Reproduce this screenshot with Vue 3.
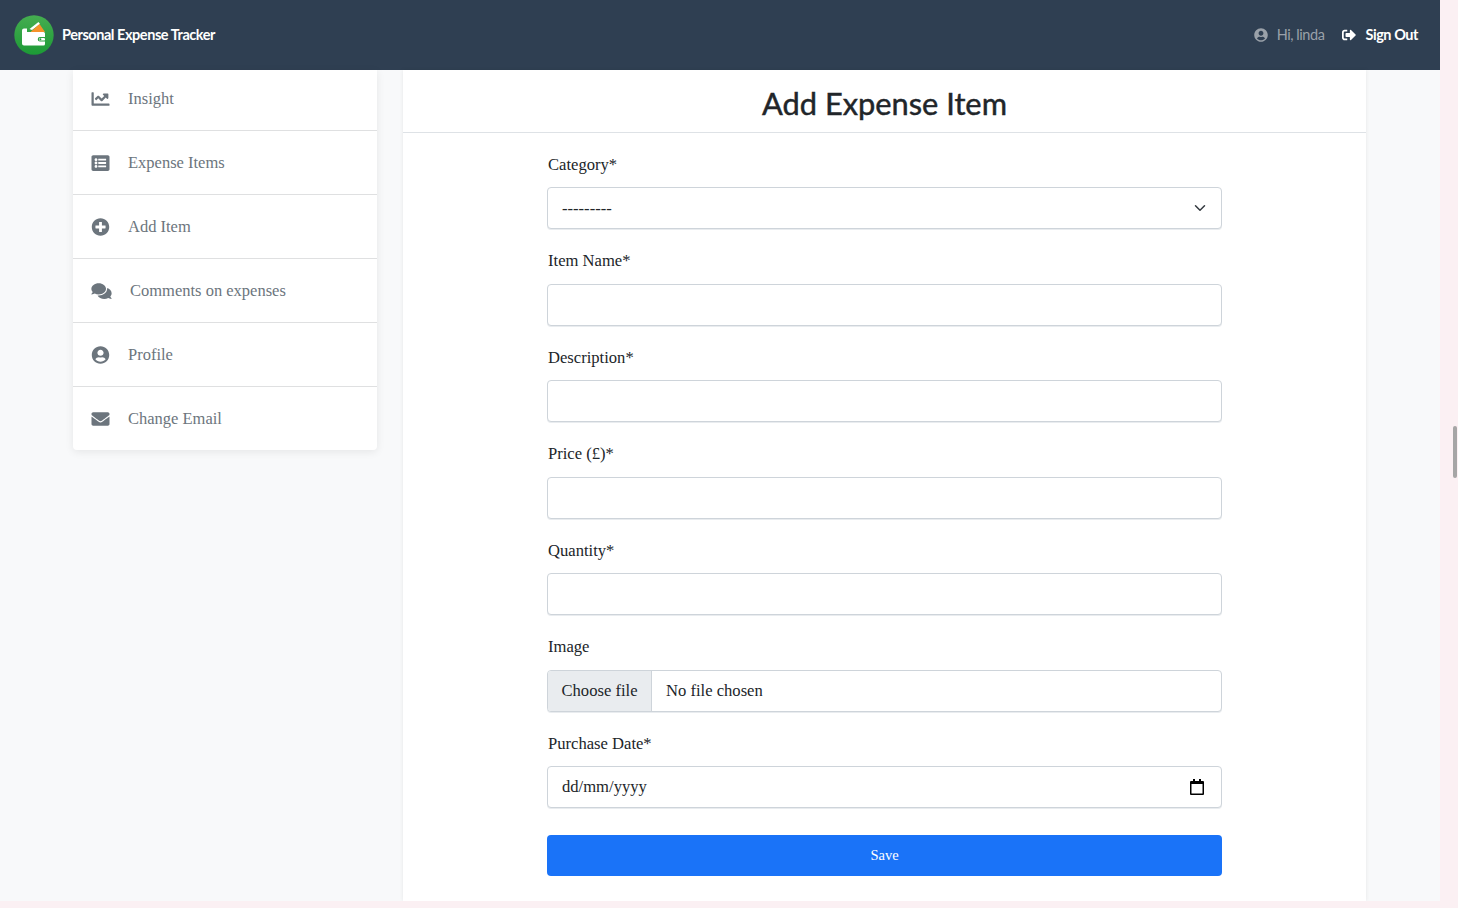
<script setup>
const menu = [
  { label: 'Insight', box: '0 0 512 512', d: 'M496 384H64V80c0-8.84-7.16-16-16-16H16C7.16 64 0 71.16 0 80v336c0 17.67 14.33 32 32 32h464c8.84 0 16-7.16 16-16v-32c0-8.84-7.16-16-16-16zM464 96H345.94c-21.38 0-32.09 25.85-16.97 40.97l32.4 32.4L288 242.75l-73.37-73.37c-12.5-12.5-32.76-12.5-45.25 0l-68.69 68.69c-6.25 6.25-6.25 16.38 0 22.63l22.62 22.62c6.25 6.25 16.38 6.25 22.63 0L192 237.25l73.37 73.37c12.5 12.5 32.76 12.5 45.25 0l96-96 32.4 32.4c15.12 15.12 40.97 4.41 40.97-16.97V112c.01-8.84-7.15-16-15.99-16z' },
  { label: 'Expense Items', box: '0 0 512 512', d: 'M464 480H48c-26.51 0-48-21.49-48-48V80c0-26.51 21.49-48 48-48h416c26.51 0 48 21.49 48 48v352c0 26.51-21.49 48-48 48zM128 120c-22.091 0-40 17.909-40 40s17.909 40 40 40 40-17.909 40-40-17.909-40-40-40zm0 96c-22.091 0-40 17.909-40 40s17.909 40 40 40 40-17.909 40-40-17.909-40-40-40zm0 96c-22.091 0-40 17.909-40 40s17.909 40 40 40 40-17.909 40-40-17.909-40-40-40zm288-136v-32c0-6.627-5.373-12-12-12H204c-6.627 0-12 5.373-12 12v32c0 6.627 5.373 12 12 12h200c6.627 0 12-5.373 12-12zm0 96v-32c0-6.627-5.373-12-12-12H204c-6.627 0-12 5.373-12 12v32c0 6.627 5.373 12 12 12h200c6.627 0 12-5.373 12-12zm0 96v-32c0-6.627-5.373-12-12-12H204c-6.627 0-12 5.373-12 12v32c0 6.627 5.373 12 12 12h200c6.627 0 12-5.373 12-12z' },
  { label: 'Add Item', box: '0 0 512 512', d: 'M256 8C119 8 8 119 8 256s111 248 248 248 248-111 248-248S393 8 256 8zm144 276c0 6.6-5.4 12-12 12h-92v92c0 6.6-5.4 12-12 12h-56c-6.6 0-12-5.4-12-12v-92h-92c-6.6 0-12-5.4-12-12v-56c0-6.6 5.4-12 12-12h92v-92c0-6.6 5.4-12 12-12h56c6.6 0 12 5.4 12 12v92h92c6.6 0 12 5.4 12 12v56z' },
  { label: 'Comments on expenses', wide: true, box: '0 0 576 512', d: 'M416 192c0-88.4-93.1-160-208-160S0 103.6 0 192c0 34.3 14.1 65.9 38 92-13.4 30.2-35.5 54.2-35.8 54.5-2.2 2.3-2.8 5.7-1.5 8.7S4.8 352 8 352c36.6 0 66.9-12.3 88.7-25 32.2 15.7 70.3 25 111.3 25 114.9 0 208-71.6 208-160zm122 220c23.9-26 38-57.7 38-92 0-66.9-53.5-124.2-129.3-148.1.9 6.6 1.3 13.3 1.3 20.1 0 105.9-107.7 192-240 192-10.8 0-21.3-.8-31.7-1.9C207.8 439.6 281.8 480 368 480c41 0 79.1-9.2 111.3-25 21.8 12.7 52.1 25 88.7 25 3.2 0 6.1-1.9 7.3-4.8 1.3-2.9.7-6.3-1.5-8.7-.3-.3-22.4-24.2-35.8-54.5z' },
  { label: 'Profile', box: '0 0 496 512', d: 'M248 8C111 8 0 119 0 256s111 248 248 248 248-111 248-248S385 8 248 8zm0 96c48.6 0 88 39.4 88 88s-39.4 88-88 88-88-39.4-88-88 39.4-88 88-88zm0 344c-58.7 0-111.3-26.6-146.5-68.2 18.8-35.4 55.6-59.8 98.5-59.8 2.4 0 4.8.4 7.1 1.1 13 4.2 26.6 6.9 40.9 6.9 14.3 0 28-2.7 40.9-6.9 2.3-.7 4.7-1.1 7.1-1.1 42.9 0 79.7 24.4 98.5 59.8C359.3 421.4 306.7 448 248 448z' },
  { label: 'Change Email', box: '0 0 512 512', d: 'M502.3 190.8c3.9-3.1 9.7-.2 9.7 4.7V400c0 26.5-21.5 48-48 48H48c-26.5 0-48-21.5-48-48V195.6c0-5 5.7-7.8 9.7-4.7 22.4 17.4 52.1 39.5 154.1 113.6 21.1 15.4 56.7 47.8 92.2 47.6 35.7.3 72-32.8 92.3-47.6 102-74.1 131.6-96.3 154-113.7zM256 320c23.2.4 56.6-29.2 73.4-41.4 132.7-96.3 142.8-104.7 173.4-128.7 5.8-4.5 9.2-11.5 9.2-18.9v-19c0-26.5-21.5-48-48-48H48C21.5 64 0 85.5 0 112v19c0 7.4 3.4 14.3 9.2 18.9 30.6 23.9 40.7 32.4 173.4 128.7 16.8 12.2 50.2 41.8 73.4 41.4z' }
]

const userPath = menu[4].d
const signOutPath = 'M497 273L329 441c-15 15-41 4.5-41-17v-96H152c-13.3 0-24-10.7-24-24v-96c0-13.3 10.7-24 24-24h136V88c0-21.4 25.9-32 41-17l168 168c9.3 9.4 9.3 24.6 0 34zM192 436v-40c0-6.6-5.4-12-12-12H96c-17.7 0-32-14.3-32-32V160c0-17.7 14.3-32 32-32h84c6.6 0 12-5.4 12-12V76c0-6.6-5.4-12-12-12H96c-53 0-96 43-96 96v192c0 53 43 96 96 96h84c6.6 0 12-5.4 12-12z'

const textFields = ['Item Name*', 'Description*', 'Price (£)*', 'Quantity*']
</script>

<template>
  <div class="page">
    <header class="navbar">
      <a class="brand">
        <svg class="logo" viewBox="0 0 40 40">
          <defs>
            <linearGradient id="logoGreen" x1="0" y1="0" x2="0" y2="1">
              <stop offset="0" stop-color="#45ad50" />
              <stop offset="1" stop-color="#1c9a36" />
            </linearGradient>
          </defs>
          <circle cx="20" cy="20" r="19.7" fill="url(#logoGreen)" />
          <path d="M15.5 14 L24.5 7 L26 9 L18 15Z" fill="#fff" />
          <path d="M17 16.5 L25.5 9 L31 17 H17Z" fill="#f5922b" />
          <path d="M8 15.5a2 2 0 0 1 2-2h3v3.5h16.5a1.5 1.5 0 0 1 1.5 1.5V22h-5a2.2 2.2 0 0 0 0 4.5h5v2.5a1.5 1.5 0 0 1-1.5 1.5H10a2 2 0 0 1-2-2Z" fill="#fff" />
          <rect x="25" y="22.9" width="6" height="2.7" rx="1.2" fill="#fff" />
          <circle cx="26.4" cy="24.2" r="1" fill="#1f9a38" />
        </svg>
        <span>Personal Expense Tracker</span>
      </a>
      <nav class="user-nav">
        <span class="nav-item muted">
          <svg viewBox="0 0 496 512"><path :d="userPath" /></svg>
          Hi, linda
        </span>
        <a class="nav-item">
          <svg viewBox="0 0 512 512"><path :d="signOutPath" /></svg>
          Sign Out
        </a>
      </nav>
    </header>

    <div class="content">
      <aside class="sidebar">
        <a v-for="item in menu" :key="item.label" class="menu-row" :class="{ wide: item.wide }">
          <svg :viewBox="item.box"><path :d="item.d" /></svg>
          <span>{{ item.label }}</span>
        </a>
      </aside>

      <main class="card">
        <h1 class="card-title">Add Expense Item</h1>
        <form class="form" @submit.prevent>
          <div class="field">
            <label>Category*</label>
            <div class="control">
              <select class="input">
                <option>---------</option>
              </select>
              <svg class="chevron" viewBox="0 0 16 16">
                <path d="M2 5l6 6 6-6" fill="none" stroke="#343a40" stroke-width="2" stroke-linecap="round" stroke-linejoin="round" />
              </svg>
            </div>
          </div>

          <div v-for="name in textFields" :key="name" class="field">
            <label>{{ name }}</label>
            <input class="input" type="text" />
          </div>

          <div class="field">
            <label>Image</label>
            <div class="input file">
              <button class="file-button" type="button">Choose file</button>
              <span class="file-name">No file chosen</span>
            </div>
          </div>

          <div class="field">
            <label>Purchase Date*</label>
            <div class="control">
              <input class="input" type="text" value="dd/mm/yyyy" />
              <svg class="calendar" viewBox="0 0 14 16">
                <path d="M3 0h2v2h4V0h2v2h2a1 1 0 0 1 1 1v12a1 1 0 0 1-1 1H1a1 1 0 0 1-1-1V3a1 1 0 0 1 1-1h2Z" fill="#000" />
                <rect x="1.5" y="5" width="11" height="9.5" fill="#fff" />
              </svg>
            </div>
          </div>

          <button class="save" type="submit">Save</button>
        </form>
      </main>
    </div>
    <div class="scroll-thumb"></div>
  </div>
</template>

<style scoped>
.page {
  width: 1440px;
  height: 901px;
  overflow: hidden;
  background: #f8f9fa;
  font-family: "Liberation Serif", serif;
  color: #212529;
}

.navbar {
  display: flex;
  align-items: center;
  justify-content: space-between;
  box-sizing: border-box;
  height: 70px;
  padding: 0 22px 1px 14px;
  background: #2f3f52;
  font-family: Lato, sans-serif;
}

.brand {
  display: flex;
  align-items: center;
  gap: 8px;
  color: #fff;
  font-size: 14.5px;
  font-weight: 700;
  letter-spacing: -0.45px;
}

.logo {
  width: 40px;
  height: 40px;
}

.user-nav {
  display: flex;
  align-items: center;
  gap: 18px;
}

.nav-item {
  display: flex;
  align-items: center;
  gap: 9px;
  color: #fff;
  font-size: 14.5px;
  font-weight: 700;
  letter-spacing: -0.45px;
}

.nav-item svg {
  width: 14px;
  height: 14px;
  fill: currentColor;
}

.nav-item.muted {
  color: #9aa1a9;
  font-weight: 400;
}

.content {
  display: flex;
  gap: 26px;
  padding-left: 73px;
}

.sidebar {
  flex: none;
  align-self: flex-start;
  width: 304px;
  background: #fff;
  box-shadow: 0 2px 8px rgba(0, 0, 0, 0.08);
  border-radius: 0 0 4px 4px;
}

.menu-row {
  display: flex;
  align-items: center;
  gap: 18px;
  box-sizing: border-box;
  height: 64px;
  padding-left: 18px;
  border-bottom: 1px solid #dfe0e1;
  color: #6c757d;
  font-size: 16.5px;
}

.menu-row:first-child {
  height: 61px;
  padding-bottom: 3px;
}

.menu-row:last-child {
  height: 63px;
  border-bottom: none;
}

.menu-row svg {
  flex: none;
  width: 19px;
  height: 18px;
  fill: #6c757d;
}

.menu-row.wide svg {
  width: 21px;
}

.card {
  flex: none;
  width: 963px;
  height: 831px;
  background: #fff;
  box-shadow: 0 0 4px rgba(0, 0, 0, 0.08);
}

.card-title {
  box-sizing: border-box;
  height: 63px;
  margin: 0;
  border-bottom: 1px solid #dee2e6;
  font-family: Lato, sans-serif;
  font-size: 30.8px;
  font-weight: 400;
  -webkit-text-stroke: 0.45px #212529;
  line-height: 67px;
  text-align: center;
}

.form {
  display: flex;
  flex-direction: column;
  width: 675px;
  margin-left: 144px;
  padding-top: 16px;
}

.field {
  display: flex;
  flex-direction: column;
  margin-bottom: 16px;
}

.field label {
  height: 30.1px;
  margin-bottom: 8px;
  padding-left: 1px;
  font-size: 16.6px;
  line-height: 32px;
}

.control {
  position: relative;
}

.input {
  display: block;
  box-sizing: border-box;
  width: 100%;
  height: 42.4px;
  padding: 0 14px;
  background: #fff;
  border: 1px solid #ced4da;
  border-radius: 4px;
  box-shadow: 0 1px 0 #e9ecef;
  color: #212529;
  font-family: "Liberation Serif", serif;
  font-size: 16.6px;
  appearance: none;
  outline: none;
}

.file {
  display: flex;
  align-items: center;
  padding: 0;
  overflow: hidden;
}

.file-button {
  flex: none;
  align-self: stretch;
  width: 104px;
  padding: 0;
  background: #e9ecef;
  border: none;
  border-right: 1px solid #ced4da;
  color: #212529;
  font: inherit;
}

.file-name {
  margin-left: 14px;
}

.chevron {
  position: absolute;
  top: 15px;
  right: 16px;
  width: 12px;
  height: 12px;
  pointer-events: none;
}

.calendar {
  position: absolute;
  top: 13px;
  right: 18px;
  width: 14px;
  height: 16px;
  pointer-events: none;
}

.save {
  height: 41px;
  margin-top: 10.4px;
  background: #1a73f8;
  border: none;
  border-radius: 4px;
  color: #fff;
  font-family: "Liberation Serif", serif;
  font-size: 14.5px;
}

.scroll-thumb {
  position: absolute;
  top: 426px;
  left: 1453px;
  width: 4px;
  height: 52px;
  border-radius: 2px;
  background: #a6a6a6;
}
</style>

<style>
html,
body {
  margin: 0;
  height: 908px;
  overflow: hidden;
  background: #fbf0f3;
}
</style>
